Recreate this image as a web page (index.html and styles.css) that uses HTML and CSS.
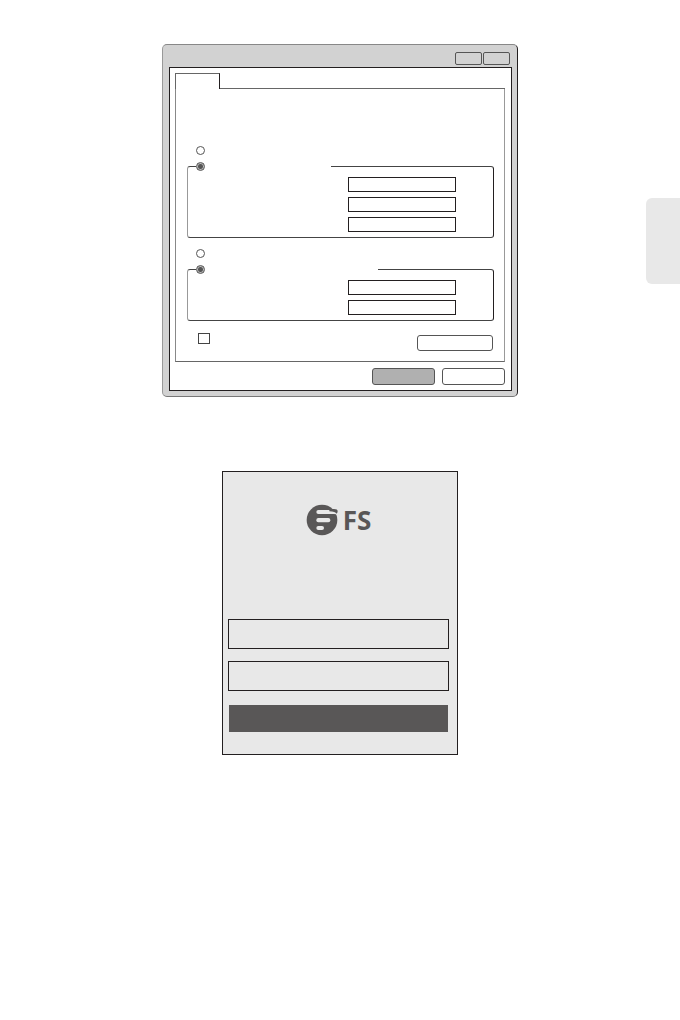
FILE: index.html
```html
<!DOCTYPE html>
<html lang="en">
<head>
    <meta charset="UTF-8">
    <meta name="viewport" content="width=device-width, initial-scale=1.0">
    <title>FS Setup</title>
    <link rel="stylesheet" href="styles.css">
</head>
<body>
    <main class="content">
        <!-- network properties dialog -->
        <section class="window">
            <div class="title-bar">
                <button class="title-button" type="button" aria-label="Help"></button>
                <button class="title-button" type="button" aria-label="Close"></button>
            </div>
            <form class="window-body">
                <div class="tabs">
                    <button class="tab" type="button" aria-label="General"></button>
                    <div class="tab-line"></div>
                </div>
                <div class="panel">
                    <input class="radio" type="radio" name="ip" aria-label="Obtain an IP address automatically">
                    <fieldset class="group">
                        <legend class="legend-ip">
                            <input class="radio" type="radio" name="ip" aria-label="Use the following IP address" checked>
                        </legend>
                        <input class="field" type="text" aria-label="IP address">
                        <input class="field" type="text" aria-label="Subnet mask">
                        <input class="field" type="text" aria-label="Default gateway">
                    </fieldset>
                    <input class="radio" type="radio" name="dns" aria-label="Obtain DNS server address automatically">
                    <fieldset class="group">
                        <legend class="legend-dns">
                            <input class="radio" type="radio" name="dns" aria-label="Use the following DNS server addresses" checked>
                        </legend>
                        <input class="field" type="text" aria-label="Preferred DNS server">
                        <input class="field" type="text" aria-label="Alternate DNS server">
                    </fieldset>
                    <div class="options">
                        <input class="checkbox" type="checkbox" aria-label="Validate settings upon exit">
                        <button class="button advanced" type="button" aria-label="Advanced"></button>
                    </div>
                </div>
                <div class="actions">
                    <button class="button ok" type="button" aria-label="OK"></button>
                    <button class="button" type="button" aria-label="Cancel"></button>
                </div>
            </form>
        </section>

        <!-- login form -->
        <form class="login">
            <div class="logo">
                <svg class="logo-mark" viewBox="0 0 96 96" aria-hidden="true">
                    <circle cx="48" cy="48" r="46" fill="#595757"/>
                    <path d="M37 18H76L92 25Q97 29 94 34Q91 30 84 30H37Q31 30 31 24T37 18Z" fill="#e8e8e8"/>
                    <path d="M70 15H84Q95 15 95 22Q95 26 92 29Q88 23 70 22Z" fill="#595757"/>
                    <rect x="31" y="42" width="42" height="13" rx="6" fill="#e8e8e8"/>
                    <rect x="31" y="66" width="23" height="12" rx="6" fill="#e8e8e8"/>
                </svg>
                <span class="logo-text">FS</span>
            </div>
            <input class="login-field" type="text" aria-label="Username">
            <input class="login-field" type="password" aria-label="Password">
            <button class="login-button" type="button" aria-label="Login"></button>
        </form>
    </main>
    <aside class="side-tab"></aside>
</body>
</html>
```
FILE: styles.css
```css
* {
    box-sizing: border-box;
}
body {
    display: grid;
    grid-template-columns: 34px 1fr 34px;
    align-items: start;
    min-height: 100vh;
    margin: 0;
    background-color: #fff;
    font-family: "Open Sans", Arial, sans-serif;
}
button, input {
    display: block;
    margin: 0;
    padding: 0;
    background-color: transparent;
    font-family: inherit;
}
.content {
    grid-column: 2;
    display: flex;
    flex-direction: column;
    align-items: center;
    gap: 74px;
    padding: 44px 0;
}
.side-tab {
    height: 86px;
    margin-top: 198px;
    border-radius: 6px 0 0 6px;
    background-color: #e8e8e8;
}

/* window */
.window {
    width: 100%;
    max-width: 356px;
    padding: 0 5px 5px 6px;
    border: 1px solid;
    border-color: #888 #231f20 #777 #999;
    border-radius: 5px;
    background-color: #d2d2d2;
}
.title-bar {
    display: flex;
    justify-content: flex-end;
    gap: 1px;
    padding: 7px 2px 2px;
}
.title-button {
    width: 27px;
    height: 13px;
    border: 1px solid #555;
    border-radius: 2px;
}
.window-body {
    padding: 5px 6px 5px 5px;
    border: 1px solid #231f20;
    background-color: #fff;
}
.tabs {
    display: flex;
}
.tab {
    width: 45px;
    height: 16px;
    border: 1px solid #666;
    border-right-color: #231f20;
    border-bottom: none;
}
.tab-line {
    flex: 1;
    border-bottom: 1px solid #666;
}
.panel {
    padding: 57px 10px 10px 11px;
    border: 1px solid #666;
    border-top: none;
    border-right-color: #999;
    border-left-color: #888;
}
.radio {
    appearance: none;
    width: 9px;
    height: 9px;
    border: 1px solid #555;
    border-radius: 50%;
}
.radio:checked {
    background: radial-gradient(circle, #555 2px, #bbb 3px);
}
.panel > .radio {
    margin-left: 9px;
}
.group {
    display: flex;
    flex-direction: column;
    align-items: flex-end;
    gap: 5px;
    min-width: 0;
    margin: 7px 0 11px;
    padding: 6px 37px 5px 8px;
    border: 1px solid;
    border-color: #444 #231f20 #444 #999;
    border-radius: 3px;
}
legend {
    padding: 0;
}
.legend-ip {
    width: 135px;
}
.legend-dns {
    width: 182px;
}
.field {
    width: 108px;
    height: 15px;
    border: 1px solid #231f20;
}
.options {
    display: flex;
    justify-content: space-between;
    align-items: flex-start;
    padding: 1px 1px 0 11px;
}
.checkbox {
    appearance: none;
    width: 12px;
    height: 11px;
    border: 1px solid #444;
}
.button {
    width: 63px;
    height: 17px;
    border: 1px solid #555;
    border-radius: 3px;
}
.advanced {
    width: 76px;
    height: 16px;
    margin-top: 2px;
}
.ok {
    background-color: #b0b0b0;
}
.actions {
    display: flex;
    justify-content: flex-end;
    gap: 7px;
    padding-top: 6px;
}

/* login */
.login {
    display: flex;
    flex-direction: column;
    gap: 12px;
    width: 100%;
    max-width: 236px;
    padding: 32px 8px 22px 5px;
    border: 1px solid #231f20;
    background-color: #e8e8e8;
}
.logo {
    display: flex;
    justify-content: center;
    align-items: center;
    gap: 5px;
    height: 32px;
    margin-bottom: 71px;
}
.logo-mark {
    width: 32px;
    height: 32px;
}
.logo-text {
    color: #595757;
    font-size: 26px;
    font-weight: 700;
    line-height: 32px;
}
.login-field {
    width: 100%;
    height: 30px;
    border: 1px solid #231f20;
}
.login-button {
    height: 27px;
    margin: 2px 1px 0;
    border: none;
    background-color: #595757;
}
```
